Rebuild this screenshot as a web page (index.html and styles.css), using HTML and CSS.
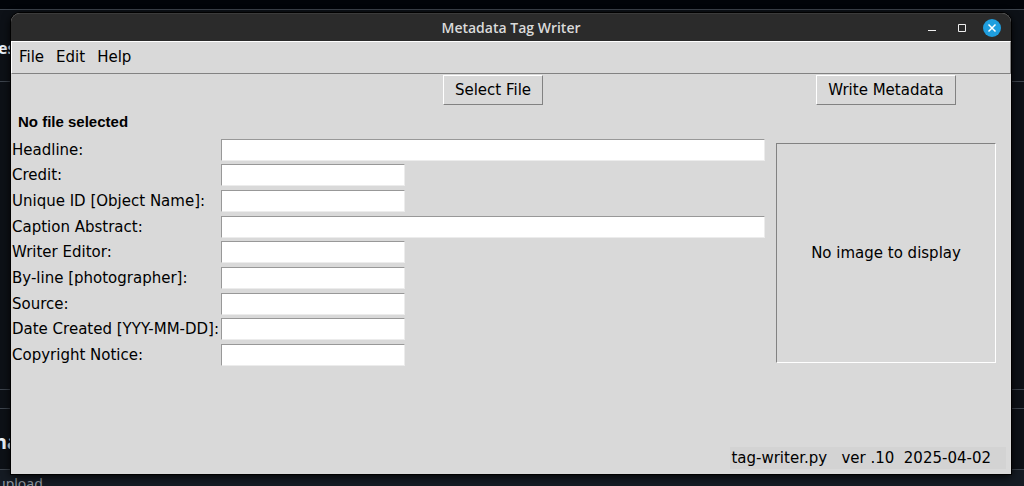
FILE: index.html
```html
<!DOCTYPE html>
<html lang="en">
<head>
<meta charset="utf-8">
<title>Metadata Tag Writer</title>
<link rel="stylesheet" href="styles.css">
</head>
<body>
<div class="desktop">
  <div class="backdrop">
    <div class="strip strip-top"></div>
    <div class="strip strip-heading">es</div>
    <div class="strip strip-body"></div>
    <div class="strip strip-gap"></div>
    <div class="strip strip-title">na</div>
    <div class="strip strip-note">upload</div>
  </div>

  <main class="window">
    <header class="titlebar">
      <h1 class="title">Metadata Tag Writer</h1>
      <div class="controls">
        <button class="control" type="button" aria-label="Minimize">
          <svg width="18" height="18" viewBox="0 0 18 18"><path d="M5 11.5h8" stroke="#eee" fill="none"/></svg>
        </button>
        <button class="control" type="button" aria-label="Maximize">
          <svg width="18" height="18" viewBox="0 0 18 18"><path d="M5.500 5.500h7v7h-7z" stroke="#eee" fill="none"/></svg>
        </button>
        <button class="control" type="button" aria-label="Close">
          <svg width="18" height="18" viewBox="0 0 18 18"><circle cx="9" cy="9" r="9" fill="#1f9ede"/><path d="M5.500 5.500l7 7M12.500 5.500l-7 7" stroke="#fff" stroke-width="1.500" fill="none"/></svg>
        </button>
      </div>
    </header>

    <nav class="menubar">
      <button class="menu" type="button">File</button>
      <button class="menu" type="button">Edit</button>
      <button class="menu" type="button">Help</button>
    </nav>

    <div class="content">
      <button class="push select-file" type="button">Select File</button>
      <button class="push write" type="button">Write Metadata</button>
      <p class="file-name">No file selected</p>

      <form class="fields">
        <label for="headline">Headline:</label><input class="entry wide" id="headline" type="text">
        <label for="credit">Credit:</label><input class="entry" id="credit" type="text">
        <label for="object-name">Unique ID [Object Name]:</label><input class="entry" id="object-name" type="text">
        <label for="caption">Caption Abstract:</label><input class="entry wide" id="caption" type="text">
        <label for="editor">Writer Editor:</label><input class="entry" id="editor" type="text">
        <label for="byline">By-line [photographer]:</label><input class="entry" id="byline" type="text">
        <label for="source">Source:</label><input class="entry" id="source" type="text">
        <label for="created">Date Created [YYY-MM-DD]:</label><input class="entry" id="created" type="text">
        <label for="copyright">Copyright Notice:</label><input class="entry" id="copyright" type="text">
      </form>
      <div class="preview">No image to display</div>
    </div>

    <footer class="status"><span class="status-text">tag-writer.py   ver .10  2025-04-02</span></footer>
  </main>
</div>
</body>
</html>
```
FILE: styles.css
```css
* { box-sizing: border-box; }

body { margin: 0; background: #0d1117; }

button, input { font: inherit; color: inherit; }

.desktop {
  position: relative;
  height: 100vh;
  overflow: hidden;
  font: 15px/18px "DejaVu Sans", sans-serif;
  color: #000;
}

.backdrop {
  height: 100%;
  color: #f0f6fc;
  font-family: "Noto Sans", sans-serif;
}

.strip { border-bottom: 1px solid #3d444d; white-space: nowrap; overflow: hidden; }
.strip-top { height: 10px; background: #010409; }
.strip-heading { height: 72px; font-size: 16px; font-weight: 700; line-height: 76px; text-indent: -2px; }
.strip-body { height: 308px; }
.strip-gap { height: 19px; }
.strip-title { height: 61px; font-size: 20px; font-weight: 700; line-height: 66px; text-indent: -6px; }
.strip-note { height: 40px; background: #151b23; color: #9198a1; font-size: 14px; line-height: 28px; text-indent: -3px; border: 0; }

.window {
  position: absolute;
  inset: 13px 13px 12px 11px;
  display: flex;
  flex-direction: column;
  background: #d9d9d9;
  border-radius: 9px 9px 0 0;
  box-shadow: 0 0 0 1px #000, 0 2px 10px #000;
}

.titlebar {
  flex: none;
  display: grid;
  grid-template-columns: 1fr auto 1fr;
  align-items: center;
  height: 28px;
  padding: 0 10px;
  background: #2b2b2b;
  border-top: 1px solid #3b3b3b;
  border-radius: 9px 9px 0 0;
}
.title {
  grid-column: 2;
  margin: 0;
  color: #dadada;
  font: 600 14px/20px "Open Sans", sans-serif;
}
.controls { display: flex; justify-content: flex-end; gap: 12px; }
.control { width: 18px; height: 18px; padding: 0; border: 0; background: none; }
.control svg { display: block; }

.menubar {
  display: flex;
  gap: 12px;
  padding: 6px 7px 7px;
  border: 1px solid;
  border-color: #fff #828282 #828282 #fff;
}
.menu { padding: 0; border: 0; background: none; line-height: 18px; }

/* The toolbar row and the form below line up on the same label column. */
.content {
  --label: 209px;
  display: grid;
  grid-template-columns: var(--label) 1fr 240px;
  padding: 1px 5px 0 0;
}

.push {
  justify-self: center;
  height: 30px;
  padding: 0 11px;
  background: #d9d9d9;
  border: 1px solid;
  border-color: #fff #828282 #828282 #fff;
}
.select-file { grid-column: 2; }
.write { grid-column: 3; }

.file-name {
  grid-column: 1 / -1;
  margin: 8px 7px 6px;
  font: bold 15px/18px "Liberation Sans", sans-serif;
}

.fields {
  grid-column: 1 / 3;
  display: grid;
  grid-template-columns: var(--label) 1fr;
  grid-auto-rows: 1fr;
  align-items: center;
}
.fields label { padding-left: 1px; white-space: nowrap; }

.entry {
  width: 184px;
  height: 22px;
  margin-left: 1px;
  padding: 0 2px;
  background: #fff;
  border: 1px solid;
  border-color: #989898 #ececec #ececec #989898;
}
.entry.wide { width: auto; margin-right: 1px; }

.preview {
  display: grid;
  place-items: center;
  height: 220px;
  margin: 6px 10px 5px;
  border: 1px solid;
  border-color: #828282 #fff #fff #828282;
}

.status { display: flex; justify-content: flex-end; margin-top: auto; padding: 5px; }
.status-text { padding: 2px 15px 2px 1px; background: #d3d3d3; white-space: pre; }
```
